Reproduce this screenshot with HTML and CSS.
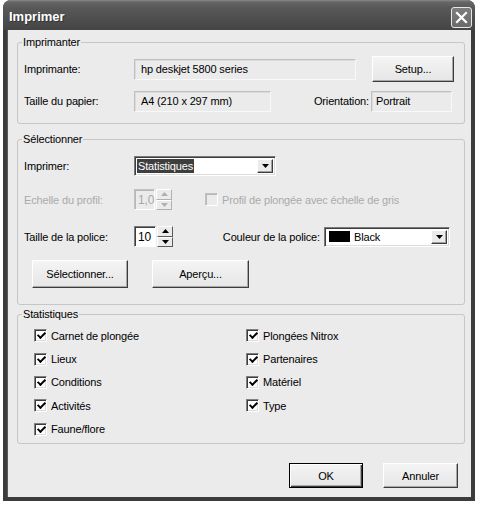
FILE: index.html
```html
<!DOCTYPE html>
<html>
<head>
<meta charset="utf-8">
<link rel="stylesheet" href="styles.css">
</head>
<body>
<div class="window">
  <div class="titlebar">
    <span class="title">Imprimer</span>
    <span class="close"><svg width="13" height="13" viewBox="0 0 13 13"><path d="M2 2 L11 11 M11 2 L2 11" stroke="#fff" stroke-width="2.2" stroke-linecap="square"/></svg></span>
  </div>
  <div class="body">
    <fieldset class="group g1">
      <legend>Imprimanter</legend>
      <div class="row r1">
        <span class="label">Imprimante:</span>
        <span class="field w-printer">hp deskjet 5800 series</span>
        <button class="btn setup">Setup...</button>
      </div>
      <div class="row r2">
        <span class="label">Taille du papier:</span>
        <span class="field w-paper">A4 (210 x 297 mm)</span>
        <span class="orient-label">Orientation:</span>
        <span class="field w-orient">Portrait</span>
      </div>
    </fieldset>

    <fieldset class="group g2">
      <legend>Sélectionner</legend>
      <div class="row s1">
        <span class="label">Imprimer:</span>
        <span class="combo w-print">
          <span class="combo-text"><span class="sel">Statistiques</span></span>
          <span class="drop"><svg width="7" height="4" viewBox="0 0 7 4"><path d="M0 0H7L3.5 4Z" fill="#000"/></svg></span>
        </span>
      </div>
      <div class="row s2 disabled">
        <span class="label">Echelle du profil:</span>
        <span class="spin">
          <span class="spin-text dis">1,0</span>
          <span class="spin-btns">
            <span class="sb"><svg width="7" height="4" viewBox="0 0 7 4"><path d="M0 4H7L3.5 0Z" fill="#b0b0b0"/></svg></span>
            <span class="sb"><svg width="7" height="4" viewBox="0 0 7 4"><path d="M0 0H7L3.5 4Z" fill="#b0b0b0"/></svg></span>
          </span>
        </span>
        <span class="cb cb-dis"></span>
        <span class="dis-text">Profil de plongée avec échelle de gris</span>
      </div>
      <div class="row s3">
        <span class="label">Taille de la police:</span>
        <span class="spin">
          <span class="spin-text">10</span>
          <span class="spin-btns">
            <span class="sb"><svg width="7" height="4" viewBox="0 0 7 4"><path d="M0 4H7L3.5 0Z" fill="#000"/></svg></span>
            <span class="sb"><svg width="7" height="4" viewBox="0 0 7 4"><path d="M0 0H7L3.5 4Z" fill="#000"/></svg></span>
          </span>
        </span>
        <span class="color-label">Couleur de la police:</span>
        <span class="combo w-color">
          <span class="combo-text"><span class="swatch"></span>Black</span>
          <span class="drop"><svg width="7" height="4" viewBox="0 0 7 4"><path d="M0 0H7L3.5 4Z" fill="#000"/></svg></span>
        </span>
      </div>
      <div class="row s4">
        <button class="btn b-sel">Sélectionner...</button>
        <button class="btn b-apercu">Aperçu...</button>
      </div>
    </fieldset>

    <fieldset class="group g3">
      <legend>Statistiques</legend>
      <div class="checks">
        <div class="col">
          <label class="chk"><span class="cb on"></span>Carnet de plongée</label>
          <label class="chk"><span class="cb on"></span>Lieux</label>
          <label class="chk"><span class="cb on"></span>Conditions</label>
          <label class="chk"><span class="cb on"></span>Activités</label>
          <label class="chk"><span class="cb on"></span>Faune/flore</label>
        </div>
        <div class="col col2">
          <label class="chk"><span class="cb on"></span>Plongées Nitrox</label>
          <label class="chk"><span class="cb on"></span>Partenaires</label>
          <label class="chk"><span class="cb on"></span>Matériel</label>
          <label class="chk"><span class="cb on"></span>Type</label>
        </div>
      </div>
    </fieldset>

    <div class="footer">
      <button class="btn ok">OK</button>
      <button class="btn cancel">Annuler</button>
    </div>
  </div>
</div>
</body>
</html>
```

FILE: styles.css
```css
* { box-sizing: border-box; }
html, body { margin: 0; padding: 0; background: #fff; }
body {
  font-family: "Liberation Sans", Arial, sans-serif;
  font-size: 11px;
  letter-spacing: -0.15px;
  color: #000;
}
.window {
  margin-left: 3px;
  width: 472px;
  height: 501px;
  background: #3c3c3c;
  border-radius: 8px 8px 0 0;
  padding: 0 4px 4px 4px;
  display: flex;
  flex-direction: column;
}
.titlebar {
  height: 30px;
  margin: 0 -4px;
  border-radius: 8px 8px 0 0;
  background: linear-gradient(#8a8a8a 0, #666 2px, #585858 8px, #4d4d4d 20px, #454545 30px);
  display: flex;
  align-items: center;
  padding: 0 3px 0 6px;
}
.title {
  color: #fff;
  font-weight: bold;
  font-size: 13px;
  letter-spacing: 0;
  padding-top: 2px;
  flex: 1;
  text-shadow: 1px 1px 0 #333;
}
.close {
  width: 21px;
  height: 21px;
  margin-top: 4px;
  border: 1px solid #e8e8e8;
  border-radius: 3px;
  background: linear-gradient(#7d7d7d, #6a6a6a);
  display: flex;
  align-items: center;
  justify-content: center;
}
.body {
  flex: 1;
  background: #ebebeb;
  padding: 6px 9px 0 9px;
  border-left: 1px solid #5a5a5a;
}
.group {
  margin: 0;
  padding: 0 6px;
  border: 1px solid #c6c6c6;
  border-radius: 3px;
  width: 448px;
  min-width: 0;
}
legend {
  padding: 0 1px;
  margin-left: -2px;
  line-height: 13px;
  color: #000;
}
.row {
  display: flex;
  align-items: center;
}
.label {
  width: 110px;
  flex: none;
}
.field {
  height: 21px;
  background: #ebebeb;
  border: 1px solid;
  border-color: #c0c0c0 #f8f8f8 #f8f8f8 #c0c0c0;
  box-shadow: inset 1px 1px 0 #dcdcdc;
  display: flex;
  align-items: center;
  padding-left: 6px;
  flex: none;
}
.g1 { padding-bottom: 9px; }
.r1 { height: 26px; margin-top: 7px; }
.r2 { height: 26px; margin-top: 6px; }
.w-printer { width: 222px; }
.w-paper { width: 137px; }
.w-orient { width: 81px; padding-left: 4px; margin-right: 6px; }
.orient-label { margin-left: auto; margin-right: 2px; }
.btn {
  font-family: "Liberation Sans", Arial, sans-serif;
  font-size: 11px;
  letter-spacing: -0.15px;
  color: #000;
  background: linear-gradient(#f4f4f4, #e6e6e6);
  border: 1px solid;
  border-color: #fff #3c3c3c #3c3c3c #fff;
  box-shadow: inset -1px -1px 0 #a8a8a8;
  padding: 0;
  border-radius: 0;
}
.setup { width: 82px; height: 26px; margin-left: 16px; }

.g2 { margin-top: 9px; padding-bottom: 16px; }
.s1 { height: 20px; margin-top: 10px; }
.s2 { height: 21px; margin-top: 13px; }
.s3 { height: 21px; margin-top: 16px; }
.s4 { height: 28px; margin-top: 13px; padding-left: 8px; }
.disabled .label { color: #aaa; }
.combo {
  height: 20px;
  display: flex;
  background: #fff;
  border: 1px solid;
  border-color: #7a7a7a #fff #fff #7a7a7a;
  box-shadow: inset 1px 1px 0 #3c3c3c, inset -1px -1px 0 #dcdcdc;
  padding: 2px;
  flex: none;
}
.w-print { width: 142px; }
.combo-text { flex: 1; display: flex; align-items: center; }
.sel { background: #3e3e3e; color: #fff; padding: 0 1px; line-height: 14px; }
.drop {
  width: 16px;
  background: #ebebeb;
  border: 1px solid;
  border-color: #fff #3c3c3c #3c3c3c #fff;
  box-shadow: inset -1px -1px 0 #a0a0a0;
  display: flex;
  align-items: center;
  justify-content: center;
}
.spin { display: flex; height: 21px; flex: none; }
.spin-text {
  width: 22px;
  background: #fff;
  border: 1px solid;
  border-color: #7a7a7a #fff #fff #7a7a7a;
  box-shadow: inset 1px 1px 0 #3c3c3c;
  display: flex;
  align-items: center;
  padding-left: 3px;
  font-size: 12px;
}
.spin-text.dis { background: #ebebeb; color: #a8a8a8; box-shadow: inset 1px 1px 0 #b8b8b8; border-color: #c0c0c0 #fff #fff #c0c0c0; width: 21px; }
.spin-btns { display: flex; flex-direction: column; width: 16px; margin-left: 1px; }
.sb {
  flex: 1;
  background: #ebebeb;
  border: 1px solid;
  border-color: #fff #5a5a5a #5a5a5a #fff;
  display: flex;
  align-items: center;
  justify-content: center;
}
.disabled .sb { border-color: #fff #b0b0b0 #b0b0b0 #fff; }
.cb {
  width: 13px;
  height: 13px;
  flex: none;
  border: 1px solid;
  border-color: #808080 #fff #fff #808080;
  box-shadow: inset 1px 1px 0 #3c3c3c, inset -1px -1px 0 #dcdcdc;
  background: #fff;
  position: relative;
}
.cb-dis { background: #ebebeb; margin-left: 33px; margin-right: 4px; border-color: #c0c0c0 #fff #fff #c0c0c0; box-shadow: inset 1px 1px 0 #b8b8b8; }
.dis-text { color: #aaa; }
.cb.on::after {
  content: "";
  position: absolute;
  left: 2px;
  top: 0px;
  width: 6px;
  height: 3px;
  border-left: 2px solid #000;
  border-bottom: 2px solid #000;
  transform: translate(0.5px, 2px) rotate(-45deg);
  transform-origin: 50% 50%;
}
.color-label { margin-left: auto; margin-right: 4px; }
.w-color { width: 126px; margin-right: 8px; padding-left: 4px; }
.swatch { width: 21px; height: 11px; background: #000; margin-right: 4px; }
.b-sel { width: 96px; height: 28px; }
.b-apercu { width: 97px; height: 28px; margin-left: 24px; }

.g3 { margin-top: 3px; height: 136px; }
.checks { display: flex; padding-left: 10px; padding-top: 3px; }
.col { display: flex; flex-direction: column; width: 217px; }
.chk { height: 23.4px; display: flex; align-items: center; }
.chk .cb { margin-right: 4px; }

.footer {
  display: flex;
  justify-content: flex-end;
  padding-top: 19px;
  padding-right: 4px;
}
.ok { width: 74px; height: 25px; border: 1px solid #000; box-shadow: inset 1px 1px 0 #fff, inset -1px -1px 0 #3c3c3c, inset -2px -2px 0 #a8a8a8; }
.cancel { width: 75px; height: 25px; margin-left: 20px; }
```
